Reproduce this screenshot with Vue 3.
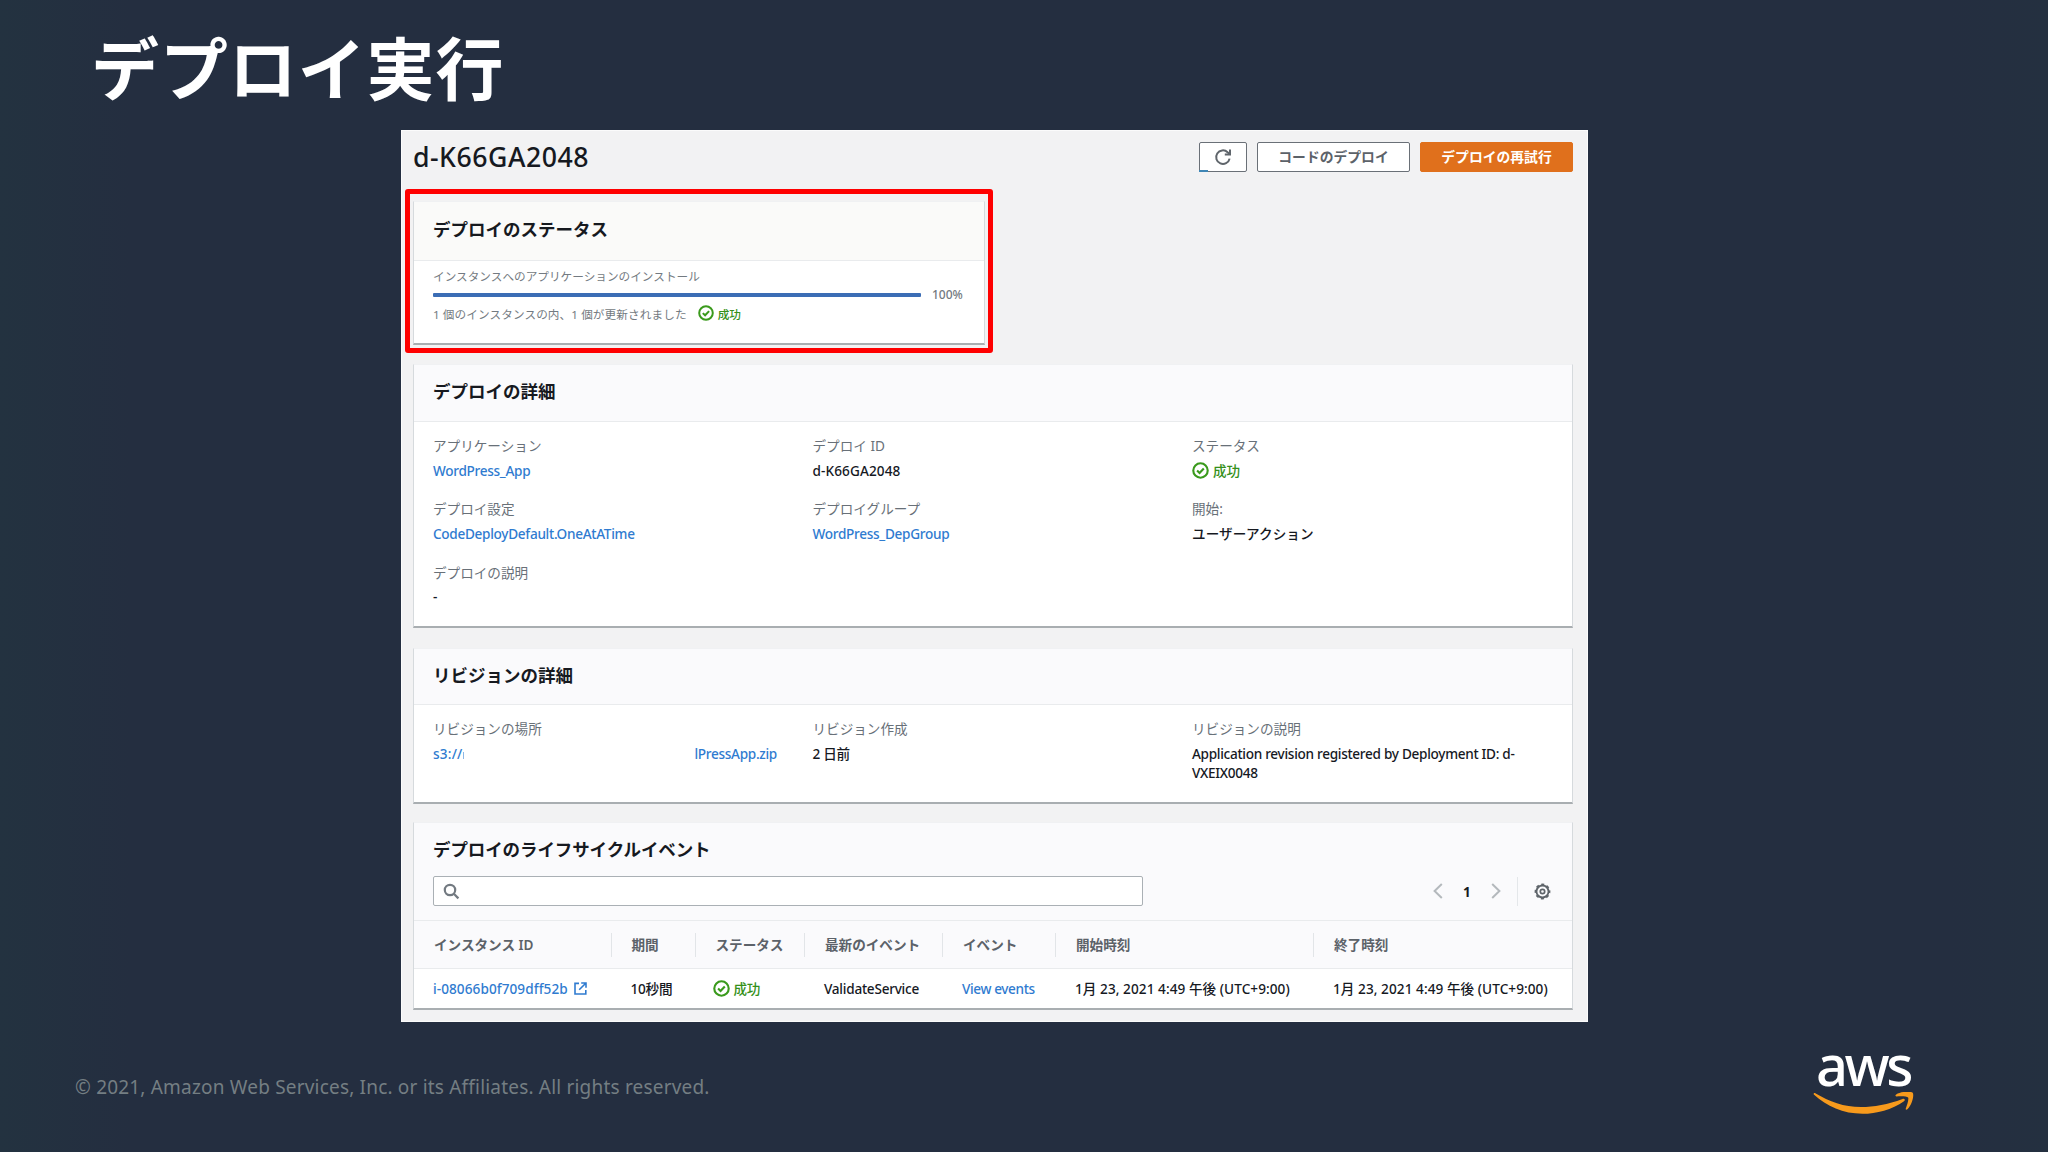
<script setup>
const details = [
  { label: 'アプリケーション', value: 'WordPress_App', type: 'link' },
  { label: 'デプロイ ID', value: 'd-K66GA2048', type: 'text', wide: true },
  { label: 'ステータス', value: '成功', type: 'status' },
  { label: 'デプロイ設定', value: 'CodeDeployDefault.OneAtATime', type: 'link' },
  { label: 'デプロイグループ', value: 'WordPress_DepGroup', type: 'link' },
  { label: '開始:', value: 'ユーザーアクション', type: 'text', wide: true },
  { label: 'デプロイの説明', value: '-', type: 'text' },
]

const columns = ['インスタンス ID', '期間', 'ステータス', '最新のイベント', 'イベント', '開始時刻', '終了時刻']
</script>

<template>
  <div class="slide">
    <h1 class="slide-title">デプロイ実行</h1>

    <main class="console">
      <header class="console-header">
        <h2 class="deploy-id">d-K66GA2048</h2>
        <div class="actions">
          <button class="btn btn-icon">
            <svg width="18" height="18" viewBox="0 0 18 18" fill="none" stroke="#5f656b" stroke-width="2">
              <path d="M15.6 10.6A6.8 6.8 0 1 1 13.6 4.200L15.400 5.800" />
              <path d="M16 1.600v5h-5.200" />
            </svg>
          </button>
          <button class="btn">コードのデプロイ</button>
          <button class="btn btn-primary">デプロイの再試行</button>
        </div>
      </header>

      <div class="highlight">
        <section class="card status-card">
          <div class="card-head">デプロイのステータス</div>
          <div class="status-body">
            <div class="status-label">インスタンスへのアプリケーションのインストール</div>
            <div class="progress-row">
              <div class="progress"></div>
              <span class="percent">100%</span>
            </div>
            <div class="status-line">
              <span class="status-text">1 個のインスタンスの内、1 個が更新されました</span>
              <span class="success success-sm">
                <svg width="16" height="16" viewBox="0 0 16 16" fill="none" stroke="#3a9a1c" stroke-width="2">
                  <circle cx="8" cy="8" r="6.8" />
                  <path d="M4.8 8.1l2.3 2.2 4-4.2" />
                </svg>
                成功
              </span>
            </div>
          </div>
        </section>
      </div>

      <section class="card details-card">
        <div class="card-head">デプロイの詳細</div>
        <div class="grid">
          <div v-for="item in details" :key="item.label" class="field">
            <div class="label">{{ item.label }}</div>
            <div v-if="item.type === 'status'" class="value success">
              <svg width="17" height="17" viewBox="0 0 16 16" fill="none" stroke="#3a9a1c" stroke-width="2">
                <circle cx="8" cy="8" r="6.8" />
                <path d="M4.8 8.1l2.3 2.2 4-4.2" />
              </svg>
              {{ item.value }}
            </div>
            <div v-else class="value" :class="{ link: item.type === 'link', wide: item.wide }">{{ item.value }}</div>
          </div>
        </div>
      </section>

      <section class="card revision-card">
        <div class="card-head">リビジョンの詳細</div>
        <div class="grid">
          <div class="field">
            <div class="label">リビジョンの場所</div>
            <div class="value link location">
              <span class="scheme">s3://</span>
              <span>lPressApp.zip</span>
            </div>
          </div>
          <div class="field">
            <div class="label">リビジョン作成</div>
            <div class="value">2 日前</div>
          </div>
          <div class="field">
            <div class="label">リビジョンの説明</div>
            <div class="value">Application revision registered by Deployment ID: d-<br>VXEIX0048</div>
          </div>
        </div>
      </section>

      <section class="card events-card">
        <div class="events-head">
          <div class="events-title">デプロイのライフサイクルイベント</div>
          <div class="toolbar">
            <div class="search">
              <svg width="17" height="17" viewBox="0 0 17 17" fill="none" stroke="#737a81" stroke-width="2.2">
                <circle cx="7" cy="7" r="5.2" />
                <path d="M10.800 10.800l4.600 4.600" />
              </svg>
            </div>
            <div class="pager">
              <svg width="10" height="16" viewBox="0 0 10 16" fill="none" stroke="#b4b9bd" stroke-width="2">
                <path d="M8.800 1L1.600 8l7.200 7" />
              </svg>
              <span class="page">1</span>
              <svg width="10" height="16" viewBox="0 0 10 16" fill="none" stroke="#b4b9bd" stroke-width="2">
                <path d="M1.200 1l7.200 7-7.200 7" />
              </svg>
              <span class="pager-line"></span>
              <svg class="gear" width="17" height="17" viewBox="0 0 17 17" fill="none" stroke="#5f656b">
                <circle cx="8.5" cy="8.5" r="6" stroke-width="1.8" />
                <circle cx="8.5" cy="8.5" r="7.2" stroke-width="1.4" stroke-dasharray="3.100 2.555" stroke-dashoffset="1.550" />
                <circle cx="8.5" cy="8.5" r="2.2" stroke-width="1.7" />
              </svg>
            </div>
          </div>
        </div>
        <div class="row row-head">
          <div v-for="name in columns" :key="name" class="cell">{{ name }}</div>
        </div>
        <div class="row row-data">
          <div class="cell link instance">
            i-08066b0f709dff52b
            <svg width="13" height="13" viewBox="0 0 13 13" fill="none" stroke="#2f7bd0" stroke-width="1.6">
              <path d="M5 1.4H1v10.600h10.800V8M7.200 1h4.800v4.800M12 1L5.200 7.800" />
            </svg>
          </div>
          <div class="cell">10秒間</div>
          <div class="cell success">
            <svg width="17" height="17" viewBox="0 0 16 16" fill="none" stroke="#3a9a1c" stroke-width="2">
              <circle cx="8" cy="8" r="6.8" />
              <path d="M4.8 8.1l2.3 2.2 4-4.2" />
            </svg>
            成功
          </div>
          <div class="cell">ValidateService</div>
          <div class="cell link events-link">View events</div>
          <div class="cell date">1月 23, 2021 4:49 午後 (UTC+9:00)</div>
          <div class="cell date">1月 23, 2021 4:49 午後 (UTC+9:00)</div>
        </div>
      </section>
    </main>

    <footer class="slide-footer">
      <span class="copyright">© 2021, Amazon Web Services, Inc. or its Affiliates. All rights reserved.</span>
      <div class="logo">
        <span class="logo-text">aws</span>
        <svg class="smile" width="102" height="24" viewBox="0 0 102 24" fill="#f79a1c">
          <path d="M.8 2.600C.2 1.300 1.300.6 2.700 1.400 16 9.300 31 15 48 15c13 0 27-2.700 41.500-8.100 2-.7 3.200 1.100 1.500 2.300C79 17.600 63.500 21.800 49.500 21.800 30 21.800 14 14.600.8 2.600z" />
          <path d="M83.200 2.400C87.500-.6 98-1 99.700.8c1.600 1.900-.3 11.700-5.300 16.400-1 .9-2.100.4-1.600-.8 1.100-2.700 3.300-9.200 2.300-10.800-1.200-1.700-8-1.500-11.600-1.200-1.300.1-1.500-1.200-.3-2z" />
        </svg>
      </div>
    </footer>
  </div>
</template>

<style>
body {
  margin: 0;
  background: #242e40;
}
</style>

<style scoped>
.slide {
  width: 2048px;
  height: 1152px;
  box-sizing: border-box;
  overflow: hidden;
  display: flex;
  flex-direction: column;
  background: linear-gradient(90deg, #233240 0, #242e40 130px, #242e40 1950px, #243040 2048px);
  font-family: 'Noto Sans', 'Noto Sans CJK JP', sans-serif;
}
h1,
h2 {
  margin: 0;
}
.slide-title {
  height: 130px;
  padding-left: 91px;
  box-sizing: border-box;
  padding-top: 18px;
  font-family: 'Noto Sans CJK JP', sans-serif;
  font-size: 68px;
  line-height: 96px;
  font-weight: 700;
  letter-spacing: 0.900px;
  color: #fff;
}
.console {
  width: 1187px;
  height: 892px;
  margin-left: 401px;
  box-sizing: border-box;
  padding: 0 14px 0 11px;
  flex-shrink: 0;
  background: #f2f2f3;
  border: 1px solid #fbfbfb;
  color: #16191f;
}
.console-header {
  display: flex;
  justify-content: space-between;
  height: 70px;
}
.deploy-id {
  font-size: 26.700px;
  line-height: 36px;
  padding-top: 8px;
  font-weight: 500;
  letter-spacing: 0.500px;
}
.actions {
  display: flex;
  gap: 10px;
  padding-top: 11px;
}
.btn {
  width: 153px;
  height: 30px;
  box-sizing: border-box;
  padding: 0 0 2px;
  display: flex;
  align-items: center;
  justify-content: center;
  border: 1.500px solid #6a7077;
  border-radius: 2px;
  background: #fff;
  color: #5c6269;
  font-family: 'Noto Sans CJK JP', sans-serif;
  font-size: 13.800px;
  font-weight: 700;
}
.btn-icon {
  position: relative;
  width: 48px;
  padding-bottom: 0;
}
/* loading sliver on the refresh button's lower edge */
.btn-icon::after {
  content: '';
  position: absolute;
  left: -1px;
  bottom: -1px;
  width: 9px;
  height: 2px;
  background: #3f86b5;
}
.btn-primary {
  background: #e0701c;
  border-color: #e0701c;
  color: #fff;
}
.highlight {
  width: 588px;
  height: 164px;
  box-sizing: border-box;
  margin: -12px 0 0 -8px;
  padding: 7px 3px 0;
  border: 5.500px solid #f00;
  border-radius: 3px;
}
.card {
  box-sizing: border-box;
  background: #fff;
  border: 1px solid #d6dadd;
  border-top-color: #f0f1f3;
  border-bottom: 2px solid #a9aeb1;
}
.card-head {
  box-sizing: border-box;
  padding-left: 19px;
  border-bottom: 1.500px solid #e9ebed;
  background: #fafafc;
  font-size: 17.500px;
  line-height: 53px;
  font-weight: 700;
}
.status-card {
  height: 144px;
}
.status-card .card-head {
  height: 59px;
  line-height: 54px;
  background: #fafaf9;
}
.status-body {
  padding: 7px 20px 0 19px;
  color: #737a81;
  font-size: 11.650px;
}
.status-label {
  line-height: 18px;
}
.progress-row {
  display: flex;
  align-items: center;
  gap: 11px;
  height: 17px;
}
.progress {
  width: 488px;
  height: 4px;
  border-radius: 1px;
  background: #3b6db5;
}
.percent {
  font-size: 12px;
  font-weight: 500;
}
.status-line {
  display: flex;
  align-items: center;
  gap: 11px;
  height: 20px;
}
.status-text {
  letter-spacing: 0.080px;
}
.success {
  display: flex;
  align-items: center;
  gap: 4px;
  color: #35901a;
}
.success-sm {
  font-weight: 500;
}
.details-card {
  height: 264px;
  margin-top: 11px;
}
.details-card .card-head {
  height: 57px;
}
.grid {
  display: grid;
  grid-template-columns: 379.500px 379.500px 1fr;
  row-gap: 19.300px;
  padding: 14px 0 0 19px;
}
.label {
  font-size: 13.600px;
  line-height: 20px;
  color: #687078;
  margin-bottom: 4.500px;
}
.value {
  font-size: 13.600px;
  line-height: 19.500px;
  font-weight: 500;
  letter-spacing: -0.300px;
}
.value.success {
  height: 19.500px;
  letter-spacing: 0;
}
.value.wide {
  letter-spacing: 0.100px;
}
.link,
.value.link {
  color: #2f7bd0;
}
.revision-card {
  height: 156px;
  margin-top: 20px;
}
.revision-card .card-head {
  height: 56px;
}
.location {
  display: flex;
  justify-content: space-between;
  width: 344px;
}
.scheme {
  letter-spacing: 0.200px;
}
.scheme::after {
  content: '';
  display: inline-block;
  width: 1px;
  height: 7px;
  background: #8db8e6;
}
.events-card {
  height: 188px;
  margin-top: 18px;
}
.events-head {
  height: 98px;
  box-sizing: border-box;
  padding: 0 19px;
  background: #fafafc;
  border-bottom: 1px solid #e9ebed;
}
.events-title {
  font-size: 17.500px;
  line-height: 53px;
  font-weight: 700;
  letter-spacing: -0.100px;
}
.toolbar {
  display: flex;
  justify-content: space-between;
  align-items: center;
}
.search {
  width: 710px;
  height: 30px;
  box-sizing: border-box;
  display: flex;
  align-items: center;
  padding-left: 9px;
  border: 1.500px solid #aab0b5;
  border-radius: 2px;
  background: #fff;
}
.pager {
  display: flex;
  align-items: center;
}
.page {
  width: 48px;
  text-align: center;
  font-size: 13.600px;
  font-weight: 700;
}
.pager-line {
  width: 1px;
  height: 29px;
  margin: 0 16px;
  background: #e4e7ea;
}
.gear {
  margin-right: 2px;
}
.row {
  display: grid;
  grid-template-columns: 197.500px 84px 109.500px 138px 113px 258px 1fr;
  align-items: center;
}
.row-head {
  height: 48px;
  box-sizing: border-box;
  background: #fafafc;
  border-bottom: 1px solid #e9ebed;
}
.row-head .cell {
  height: 24px;
  line-height: 24px;
  box-sizing: border-box;
  padding-left: 20px;
  border-right: 1px solid #e2e5e8;
  font-size: 13.600px;
  font-weight: 600;
  color: #5c6269;
}
.row-head .cell:last-child {
  border-right: 0;
}
.row-data {
  height: 38px;
}
.row-data .cell {
  padding-left: 19px;
  font-size: 13.600px;
  font-weight: 500;
  letter-spacing: -0.250px;
  white-space: nowrap;
}
.row-data .instance {
  display: flex;
  align-items: center;
  gap: 6px;
  letter-spacing: 0.070px;
}
.row-data .date {
  letter-spacing: 0.060px;
}
.row-data .events-link {
  letter-spacing: -0.380px;
}
.row-data .success {
  padding-left: 17px;
}
.slide-footer {
  display: flex;
  justify-content: space-between;
  padding: 29px 133px 0 75px;
}
.copyright {
  padding-top: 22px;
  font-size: 19px;
  line-height: 28px;
  letter-spacing: 0.190px;
  color: #747e83;
}
.logo {
  display: flex;
  flex-direction: column;
  width: 102px;
  margin-top: -8px;
}
.logo-text {
  font-size: 56px;
  line-height: 42px;
  font-weight: 500;
  letter-spacing: -3.500px;
  padding-left: 3px;
  color: #fff;
}
.smile {
  margin-top: 7px;
}
</style>
